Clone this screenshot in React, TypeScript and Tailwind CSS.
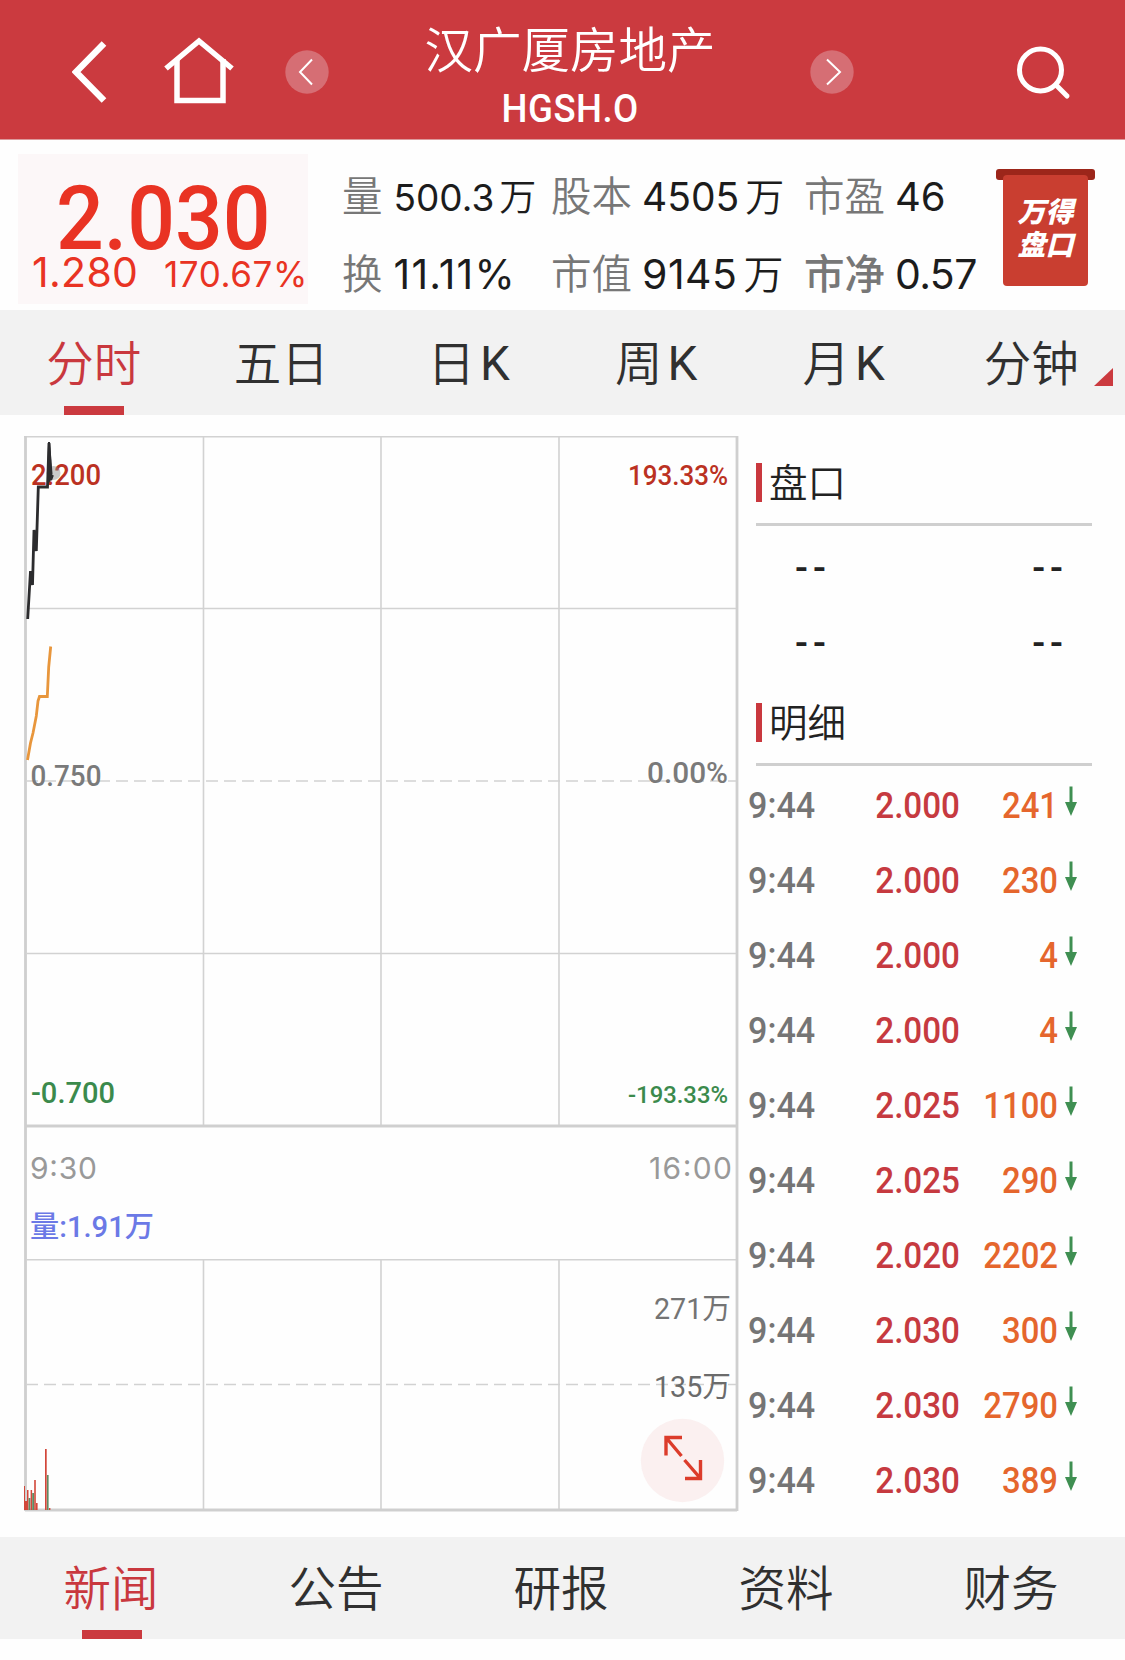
import { useState } from "react";
import clsx from "clsx";

const trades = [
  { time: "9:44", price: "2.000", volume: "241" },
  { time: "9:44", price: "2.000", volume: "230" },
  { time: "9:44", price: "2.000", volume: "4" },
  { time: "9:44", price: "2.000", volume: "4" },
  { time: "9:44", price: "2.025", volume: "1100" },
  { time: "9:44", price: "2.025", volume: "290" },
  { time: "9:44", price: "2.020", volume: "2202" },
  { time: "9:44", price: "2.030", volume: "300" },
  { time: "9:44", price: "2.030", volume: "2790" },
  { time: "9:44", price: "2.030", volume: "389" },
];

const volumeBars = [
  { x: 24, top: 1486, w: 1, up: true },
  { x: 25, top: 1501, w: 2, up: true },
  { x: 27, top: 1490, w: 1.5, up: true },
  { x: 28.6, top: 1498, w: 1.8, up: false },
  { x: 30.6, top: 1490, w: 1.5, up: true },
  { x: 32.2, top: 1493, w: 1.8, up: false },
  { x: 34.2, top: 1480, w: 1.6, up: true },
  { x: 36, top: 1503, w: 1.6, up: true },
  { x: 45, top: 1449, w: 1.7, up: true },
  { x: 47, top: 1475, w: 1.6, up: false },
  { x: 49, top: 1508, w: 1.4, up: true },
];

const periods = ["分时", "五日", "日K", "周K", "月K", "分钟"];
const sections = ["新闻", "公告", "研报", "资料", "财务"];

function RoundArrow({ next }: { next?: boolean }) {
  return (
    <svg width="44" height="44" viewBox="0 0 44 44" fill="none">
      <circle cx="22" cy="22" r="21.7" fill="#d66e74" />
      <path
        d={next ? "M17 9.5L30 22L17 34.5" : "M27 9.5L15 22L27 34.5"}
        stroke="white"
        strokeWidth="2"
      />
    </svg>
  );
}

function Header() {
  return (
    <header className="flex h-[140px] items-center border-b border-[#dc9a9c] bg-[#cb3a3f] pt-1 pl-[72px] text-white">
      <svg width="35" height="62" viewBox="0 0 35 62" fill="none">
        <path d="M32 2.5L4 31L32 59.5" stroke="white" strokeWidth="6.5" />
      </svg>
      <svg
        className="mb-0.5 ml-[56px]"
        width="73"
        height="67"
        viewBox="0 0 73 67"
        fill="none"
        stroke="white"
        strokeWidth="5.5"
      >
        <path d="M3 31.5L36 4L69 31.5" />
        <path d="M14 22V63.5H60V22" />
      </svg>
      <div className="ml-[49px]">
        <RoundArrow />
      </div>
      <div className="ml-[82px] flex w-[318px] flex-col items-center pt-[14px]">
        <h1 className="text-[48.5px] leading-[52px] font-[350]">汉广厦房地产</h1>
        <div className="mt-[9px] h-[54px] font-[Roboto] text-[38.5px] leading-[54px] font-medium tracking-[0.5px]">
          <span className="inline-block scale-x-[0.95]">HGSH.O</span>
        </div>
      </div>
      <div className="ml-[81px]">
        <RoundArrow next />
      </div>
      <svg
        className="mt-0.5 ml-[162px]"
        width="56"
        height="54"
        viewBox="0 0 56 54"
        fill="none"
        stroke="white"
        strokeWidth="5"
      >
        <circle cx="24.5" cy="24" r="21" />
        <path d="M40 39L51 50" strokeLinecap="round" />
      </svg>
    </header>
  );
}

type StatProps = {
  label: string;
  value: string;
  unit?: string;
  className?: string;
  labelClass?: string;
  unitClass?: string;
};

function Stat({ label, value, unit, className, labelClass, unitClass }: StatProps) {
  return (
    <div className="flex h-[78px] items-baseline whitespace-nowrap text-[#1c1c1c]">
      <span className={clsx("text-[40.5px] leading-[78px] text-[#777]", labelClass || "font-[350]")}>{label}</span>
      <span className={clsx("ml-[10px] font-[Inter]", className)}>{value}</span>
      {unit && <span className={clsx("font-[350]", unitClass)}>{unit}</span>}
    </div>
  );
}

function Quote() {
  return (
    <section className="flex h-[170px] pl-[18px]">
      <div className="mt-[14px] h-[150px] w-[290px] bg-[#fcf7f8] pt-[10px] text-[#e93323]">
        <div className="ml-[38px] h-[87px] origin-left scale-x-[0.945] font-[Roboto] text-[89px] leading-[110px] font-medium">
          2.030
        </div>
        <div className="flex items-baseline font-[Inter] leading-[42px] whitespace-nowrap">
          <span className="ml-[14px] w-[135px] text-[41px] tracking-[0.3px]">1.280</span>
          <span className="text-[35px] tracking-[0.6px]">170.67%</span>
        </div>
      </div>
      <div className="ml-[34px] w-[209px] pt-[15px]">
        <Stat label="量" value="500.3" unit="万" className="ml-[11px] text-[37px]" unitClass="ml-[5px] text-[37px]" />
        <Stat label="换" value="11.11%" className="ml-[11px] text-[41px] tracking-[1.2px]" />
      </div>
      <div className="w-[253px] pt-[15px]">
        <Stat label="股本" value="4505" unit="万" className="text-[39px]" unitClass="ml-[6px] text-[39px]" />
        <Stat label="市值" value="9145" unit="万" className="text-[41px] tracking-[0.5px]" unitClass="ml-[6px] text-[40px]" />
      </div>
      <div className="w-[192px] pt-[15px]">
        <Stat label="市盈" value="46" className="text-[40px]" />
        <Stat label="市净" value="0.57" className="text-[41px] tracking-[-0.6px]" labelClass="font-medium" />
      </div>
      <div className="mt-[29px] flex w-[99px] flex-col items-center">
        <div className="h-[11px] w-full rounded-[3px] bg-[#9c261a]" />
        <div className="-mt-[5px] h-[111px] w-[85px] rounded-[4px] bg-[#c93e30] pt-[19px] text-center text-[28px] leading-[33px] font-black text-white italic">
          万得
          <br />
          盘口
        </div>
      </div>
    </section>
  );
}

function Chart() {
  return (
    <svg width="744" height="1122" viewBox="0 415 744 1122" fill="none" className="shrink-0">
      <g stroke="#d2d2d2" strokeWidth="1.6">
        <path d="M24 436.7H738M27 608.5H736M27 953.5H736M27 1259.7H736" />
        <path d="M203.5 437V1125M381 437V1125M559 437V1125" />
        <path d="M203.5 1260V1510M381 1260V1510M559 1260V1510" />
        <path d="M27 781H736M27 1384.5H736" strokeDasharray="12 6" strokeDashoffset="1" />
      </g>
      <g stroke="#cfcfcf" strokeWidth="2.8">
        <path d="M25.5 436V1511M737 436V1511" />
        <path d="M25 1126H737M25 1510H737" />
      </g>

      <g fontFamily="Roboto, 'Noto Sans CJK SC', sans-serif" fontWeight="500" fontSize="29">
        <text x="31" y="484.5" fill="#bb3122" textLength="70" lengthAdjust="spacingAndGlyphs">2.200</text>
        <text x="628" y="485" fill="#bb3122" fontSize="27" textLength="100" lengthAdjust="spacingAndGlyphs">193.33%</text>
        <text x="30.5" y="786" fill="#7a7a7a" textLength="71" lengthAdjust="spacingAndGlyphs">0.750</text>
        <text x="647" y="783" fill="#7a7a7a" textLength="81" lengthAdjust="spacingAndGlyphs">0.00%</text>
        <text x="31" y="1103" fill="#3b8a4c" textLength="84" lengthAdjust="spacingAndGlyphs">-0.700</text>
        <text x="628" y="1103" fill="#3b8a4c" fontSize="24.5" textLength="100" lengthAdjust="spacingAndGlyphs">-193.33%</text>
        <text x="30" y="1237" fill="#6b79e6" textLength="124" lengthAdjust="spacingAndGlyphs">量:1.91万</text>
        <text x="654" y="1319" fill="#747474" fontWeight="400" textLength="77" lengthAdjust="spacingAndGlyphs">271万</text>
        <text x="654" y="1397" fill="#6b6b6b" fontWeight="400" textLength="77" lengthAdjust="spacingAndGlyphs">135万</text>
      </g>
      <g fontFamily="Inter, sans-serif" fontSize="30" fill="#999">
        <text x="30" y="1179" textLength="67">9:30</text>
        <text x="649" y="1179" textLength="83">16:00</text>
      </g>

      <circle cx="53.5" cy="473" r="7" fill="#8c8c8c" fillOpacity="0.45" />
      <path d="M47 485L48 442H50L52.5 474L50.5 481Z" fill="#2c2c2e" />
      <path
        d="M27.7 619L30.5 571L32.5 585L34 530L36.3 551L38.3 487H47.5L49 443L50.7 480L52.5 475"
        stroke="#2c2c2e"
        strokeWidth="2.8"
      />
      <path
        d="M27.5 760L30.5 743L33 733L36.3 716L38 701L39.5 696.5H47.3L48.7 667L50.7 646.5"
        stroke="#e8963c"
        strokeWidth="2.8"
      />
      {volumeBars.map((bar) => (
        <rect
          key={bar.x}
          x={bar.x}
          y={bar.top}
          width={bar.w}
          height={1510 - bar.top}
          fill={bar.up ? "#d2473a" : "#5f8a62"}
        />
      ))}

      <circle cx="682.5" cy="1460.5" r="41.7" fill="#fbf0f0" />
      <g stroke="#dc3c2b" strokeWidth="3.4">
        <path d="M666 1455.5V1437.5H682M666 1437.5L681.5 1456" />
        <path d="M700.5 1460V1478.5H685M700.5 1478.5L684.5 1460" />
      </g>
    </svg>
  );
}

function PanelTitle({ children }: { children: string }) {
  return (
    <div className="ml-[12px] flex h-[63px] w-[336px] items-start border-b-3 border-[#cfcfcf]">
      <div className="h-[39px] w-[6px] bg-[#c9383e]" />
      <h2 className="ml-[7px] text-[38.5px] leading-[34px] font-[350] text-[#222]">{children}</h2>
    </div>
  );
}

function DashRow() {
  return (
    <div className="flex h-[75px] items-center justify-between pr-[57px] pl-[51px] font-[Roboto] text-[38px] leading-[76px] font-medium tracking-[5px] text-[#222]">
      <span>--</span>
      <span>--</span>
    </div>
  );
}

function TradePanel() {
  return (
    <aside className="w-[381px] pt-[48px]">
      <PanelTitle>盘口</PanelTitle>
      <div className="pt-[4px]">
        <DashRow />
        <DashRow />
      </div>
      <div className="mt-[23px]">
        <PanelTitle>明细</PanelTitle>
      </div>
      <ul className="font-[Roboto] text-[36.5px] leading-[75px] font-medium">
        {trades.map((trade, i) => (
          <li key={i} className="flex h-[75px] pt-[2px]">
            <span className="ml-[4px] w-[80px] origin-left scale-x-[0.935] text-[#757575]">{trade.time}</span>
            <span className="w-[132px] origin-right scale-x-[0.91] text-right text-[#c63a40]">{trade.price}</span>
            <span className="w-[98px] origin-right scale-x-[0.9] text-right text-[#e5662d]">{trade.volume}</span>
            <svg className="mt-[18px] ml-[6px]" width="14" height="30" viewBox="0 0 14 30">
              <path d="M5.5 0.5H8.5V16H13L7 30L1 16H5.5Z" fill="#3f8f52" />
            </svg>
          </li>
        ))}
      </ul>
    </aside>
  );
}

export default function App() {
  const [period, setPeriod] = useState("分时");
  const [section, setSection] = useState("新闻");

  return (
    <div className="h-[1660px] w-[1125px] overflow-hidden bg-[#fefefe] font-['Noto_Sans_CJK_SC',sans-serif]">
      <Header />
      <Quote />
      <nav className="grid h-[105px] grid-cols-6 bg-[#f2f2f2] text-[47.5px] leading-[102px] font-[350] text-[#303030]">
        {periods.map((name) => (
          <button
            key={name}
            onClick={() => setPeriod(name)}
            className={clsx("relative flex h-[105px] justify-center", name === period && "text-[#c9383e]")}
          >
            {name.replace("K", "")}
            {name.endsWith("K") && <span className="ml-[5px] pt-[3px] font-[Roboto] font-normal">K</span>}
            {name === period && <span className="absolute bottom-0 h-[9px] w-[60px] bg-[#cb3a3f]" />}
            {name === "分钟" && (
              <svg className="absolute right-[12px] bottom-[29px]" width="19" height="18" viewBox="0 0 19 18">
                <path d="M19 0V18H0Z" fill="#cb3a3f" />
              </svg>
            )}
          </button>
        ))}
      </nav>
      <main className="flex h-[1122px]">
        <Chart />
        <TradePanel />
      </main>
      <nav className="grid h-[102px] grid-cols-5 bg-[#f2f2f2] text-[47.5px] leading-[98px] font-[350] text-[#303030]">
        {sections.map((name) => (
          <button
            key={name}
            onClick={() => setSection(name)}
            className={clsx("relative flex h-[102px] justify-center pr-[3px]", name === section && "text-[#c9383e]")}
          >
            {name}
            {name === section && <span className="absolute bottom-0 left-[82px] h-[9px] w-[60px] bg-[#cb3a3f]" />}
          </button>
        ))}
      </nav>
    </div>
  );
}
